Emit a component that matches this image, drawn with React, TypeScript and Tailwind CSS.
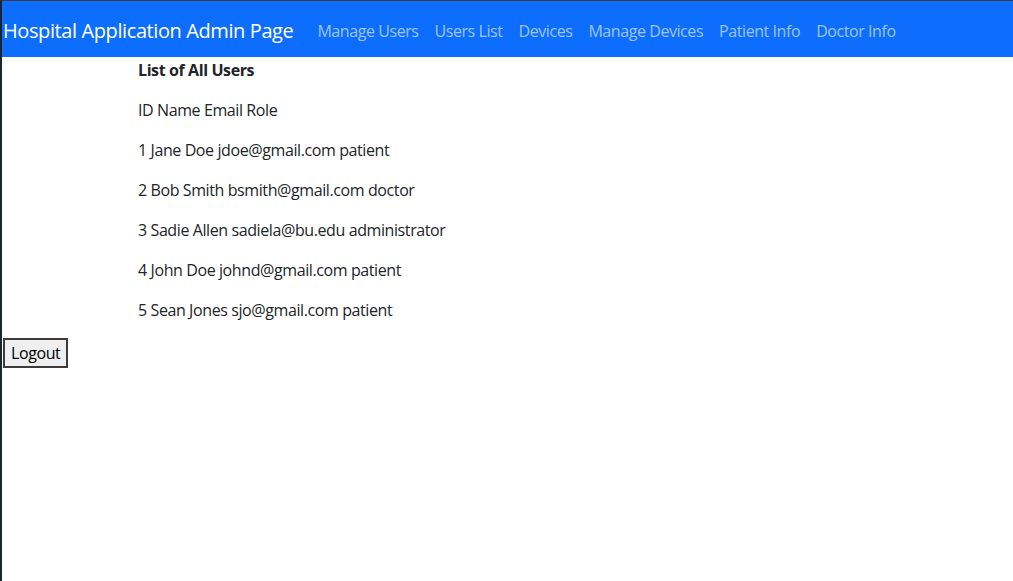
export default function App() {
  const rows = [
    "ID Name Email Role",
    "1 Jane Doe jdoe@gmail.com patient",
    "2 Bob Smith bsmith@gmail.com doctor",
    "3 Sadie Allen sadiela@bu.edu administrator",
    "4 John Doe johnd@gmail.com patient",
    "5 Sean Jones sjo@gmail.com patient",
  ];
  return (
    <div
      className="w-[1013px] h-[581px] bg-white border-t border-[#3c3c3c] border-l-2 border-l-[#1c2430] overflow-hidden text-[#212529] tracking-[-0.4px]"
      style={{ fontFamily: '"Open Sans", "Noto Sans", sans-serif' }}
    >
      <nav className="h-[56px] bg-[#0d6efd] flex items-center pl-[1px] pt-[4px]">
        <span className="text-white text-[20px] leading-[30px] mr-[24px]">Hospital Application Admin Page</span>
        <div className="flex gap-[16px] text-[16px] text-[#9ec5fe] tracking-[-0.43px]">
          <span>Manage Users</span>
          <span>Users List</span>
          <span>Devices</span>
          <span>Manage Devices</span>
          <span>Patient Info</span>
          <span>Doctor Info</span>
        </div>
      </nav>
      <div className="pl-[136px] text-[16px] leading-[24px] pt-[1px]">
        <p className="font-bold">List of All Users</p>
        {rows.map((r) => (
          <p key={r} className="mt-[16px]">{r}</p>
        ))}
      </div>
      <div className="pt-[16px] pl-[1px]">
        <button className="border-2 border-[#3c3c3c] bg-[#efefef] px-[6px] h-[30px] text-[16px] leading-[24px] text-black">
          Logout
        </button>
      </div>
    </div>
  );
}
